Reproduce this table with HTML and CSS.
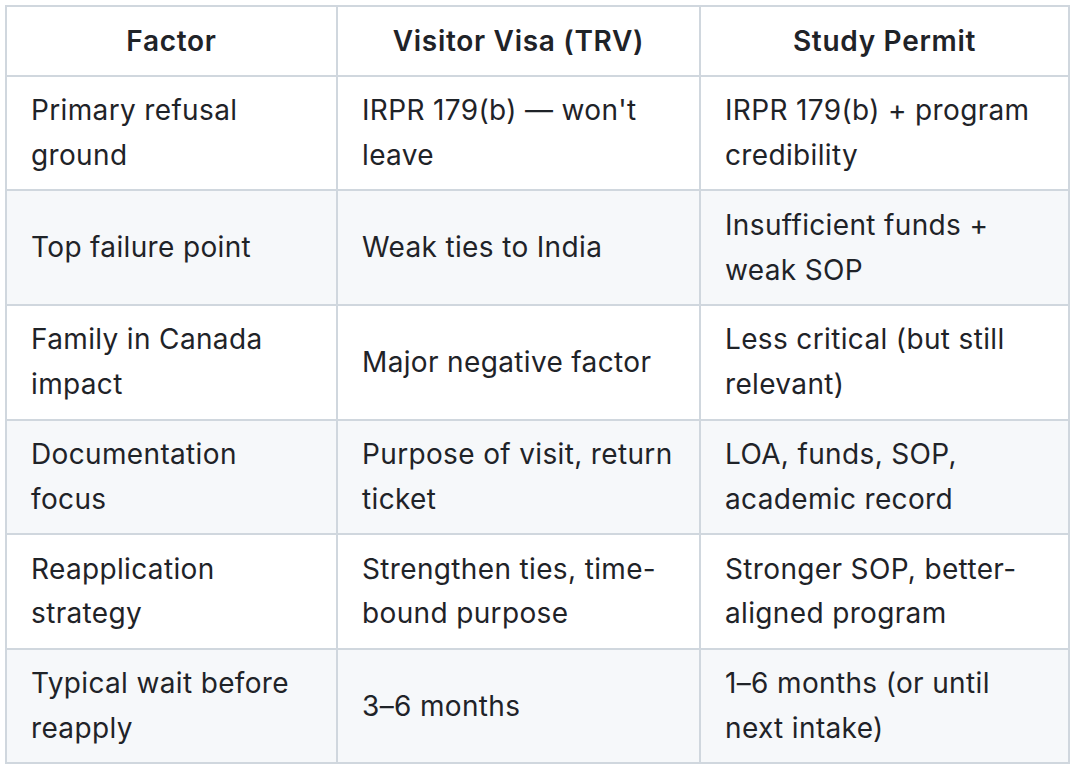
FILE: index.html
```html
<!DOCTYPE html>
<html lang="en">
<head>
<meta charset="utf-8">
<title>Visa comparison</title>
<link rel="stylesheet" href="styles.css">
</head>
<body>
<table class="cmp">
  <colgroup>
    <col class="c1">
    <col class="c2">
    <col class="c3">
  </colgroup>
  <thead>
    <tr><th>Factor</th><th>Visitor Visa (TRV)</th><th>Study Permit</th></tr>
  </thead>
  <tbody>
    <tr><td>Primary refusal ground</td><td>IRPR 179(b) — won't leave</td><td>IRPR 179(b) + program credibility</td></tr>
    <tr><td>Top failure point</td><td>Weak ties to India</td><td>Insufficient funds + weak SOP</td></tr>
    <tr><td>Family in Canada impact</td><td>Major negative factor</td><td>Less critical (but still relevant)</td></tr>
    <tr><td>Documentation focus</td><td>Purpose of visit, return ticket</td><td>LOA, funds, SOP, academic record</td></tr>
    <tr><td>Reapplication strategy</td><td>Strengthen ties, time-bound purpose</td><td>Stronger SOP, better-aligned program</td></tr>
    <tr><td>Typical wait before reapply</td><td>3–6 months</td><td>1–6 months (or until next intake)</td></tr>
  </tbody>
</table>
</body>
</html>
```

FILE: styles.css
```css
html, body {
  margin: 0;
  padding: 0;
  background: #ffffff;
}
body {
  padding: 5px;
  font-family: Inter, "Liberation Sans", sans-serif;
  color: #1f2328;
}
.cmp {
  border-collapse: collapse;
  width: 1063px;
  table-layout: fixed;
  font-size: 28px;
  line-height: 44.8px;
  letter-spacing: 0.35px;
}
.c1 { width: 331px; }
.c2 { width: 363px; }
.c3 { width: 369px; }
.cmp th, .cmp td {
  border: 2px solid #d0d7de;
  padding: 11.5px 24px;
  vertical-align: middle;
  text-align: left;
}
.cmp th {
  font-weight: 600;
  text-align: center;
  letter-spacing: 0.7px;
}
.cmp tbody tr:nth-child(even) {
  background: #f6f8fa;
}
```
